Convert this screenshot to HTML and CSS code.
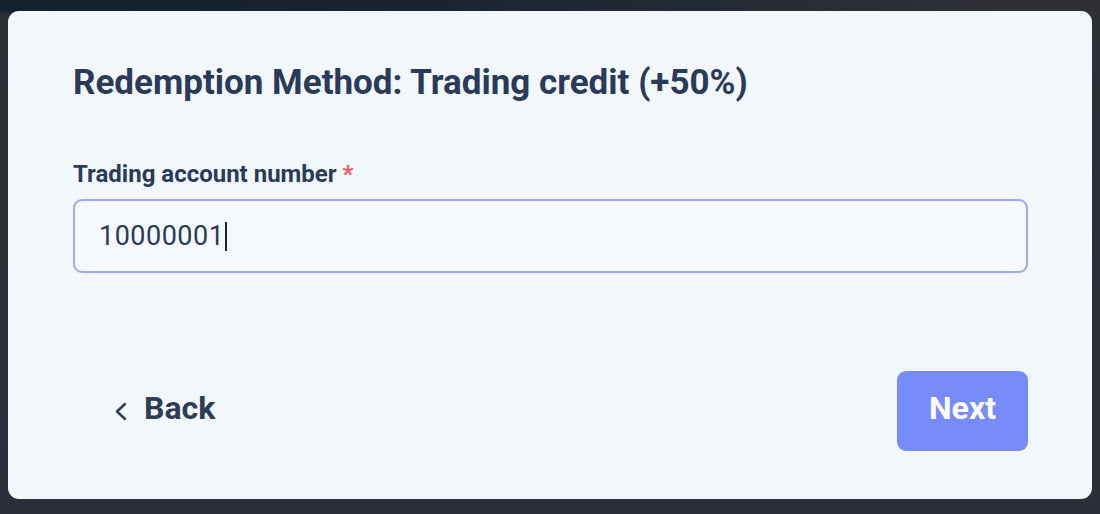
FILE: index.html
```html
<!DOCTYPE html>
<html lang="en">
<head>
<meta charset="utf-8">
<title>Redemption Method</title>
<link rel="stylesheet" href="styles.css">
</head>
<body>
<div class="page">
  <div class="card">
    <h2 class="title">Redemption Method: Trading credit (+50%)</h2>
    <div class="field">
      <label class="label" for="acct">Trading account number <span class="req">*</span></label>
      <div class="input"><span class="value">10000001</span><span class="caret"></span></div>
    </div>
    <div class="footer">
      <button class="back" type="button">
        <svg class="chev" width="13" height="19" viewBox="0 0 13 19"><path d="M11 2 L3 9.5 L11 17" fill="none" stroke="#2f3c58" stroke-width="2.4" stroke-linecap="round" stroke-linejoin="round"/></svg>
        <span class="back-text">Back</span>
      </button>
      <button class="next" type="button">Next</button>
    </div>
  </div>
</div>
</body>
</html>
```
FILE: styles.css
```css
html, body {
  margin: 0;
  padding: 0;
}
body {
  width: 1100px;
  height: 514px;
  overflow: hidden;
  background: linear-gradient(90deg, #14202e 0%, #1a2430 40%, #2e3036 90%);
  font-family: Roboto, "Noto Sans", sans-serif;
}
.page {
  height: 514px;
  box-sizing: border-box;
  padding: 11px 8px 15px 8px;
  background: linear-gradient(180deg, rgba(46,48,54,0) 0%, rgba(46,48,54,0) 2%, #2d2f35 3%, #2b2e38 100%);
}
.card {
  height: 488px;
  box-sizing: border-box;
  background: #f2f7fc;
  border-radius: 11px;
  padding: 51px 64px 48px 65px;
  display: flex;
  flex-direction: column;
}
.title {
  margin: 0;
  font-size: 35px;
  line-height: 41px;
  font-weight: 700;
  color: #2b3a58;
}
.field {
  margin-top: 57px;
  display: flex;
  flex-direction: column;
}
.label {
  font-size: 24px;
  line-height: 28px;
  font-weight: 700;
  color: #2b3a58;
}
.req {
  color: #ef5a5a;
}
.input {
  margin-top: 11px;
  height: 74px;
  box-sizing: border-box;
  border: 2px solid #9ea8f5;
  border-radius: 9px;
  background: #f5f8fd;
  display: flex;
  align-items: center;
  padding-left: 24px;
}
.value {
  font-size: 27px;
  letter-spacing: 0.5px;
  color: #2b3a58;
}
.caret {
  display: inline-block;
  width: 2px;
  height: 29px;
  background: #1d2433;
  margin-left: 1px;
}
.footer {
  margin-top: auto;
  display: flex;
  justify-content: space-between;
  align-items: center;
}
.back {
  display: flex;
  align-items: center;
  gap: 17px;
  border: none;
  background: transparent;
  padding: 0 0 0 41px;
  font-family: inherit;
  font-size: 32px;
  font-weight: 700;
  color: #2f3c58;
  cursor: pointer;
}
.back-text {
  margin-bottom: 6px;
}
.chev {
  display: block;
}
.next {
  width: 131px;
  height: 80px;
  border: none;
  border-radius: 9px;
  background: #778bfb;
  color: #ffffff;
  font-family: inherit;
  font-size: 32px;
  font-weight: 700;
  padding: 0 0 6px 0;
  cursor: pointer;
}
```
